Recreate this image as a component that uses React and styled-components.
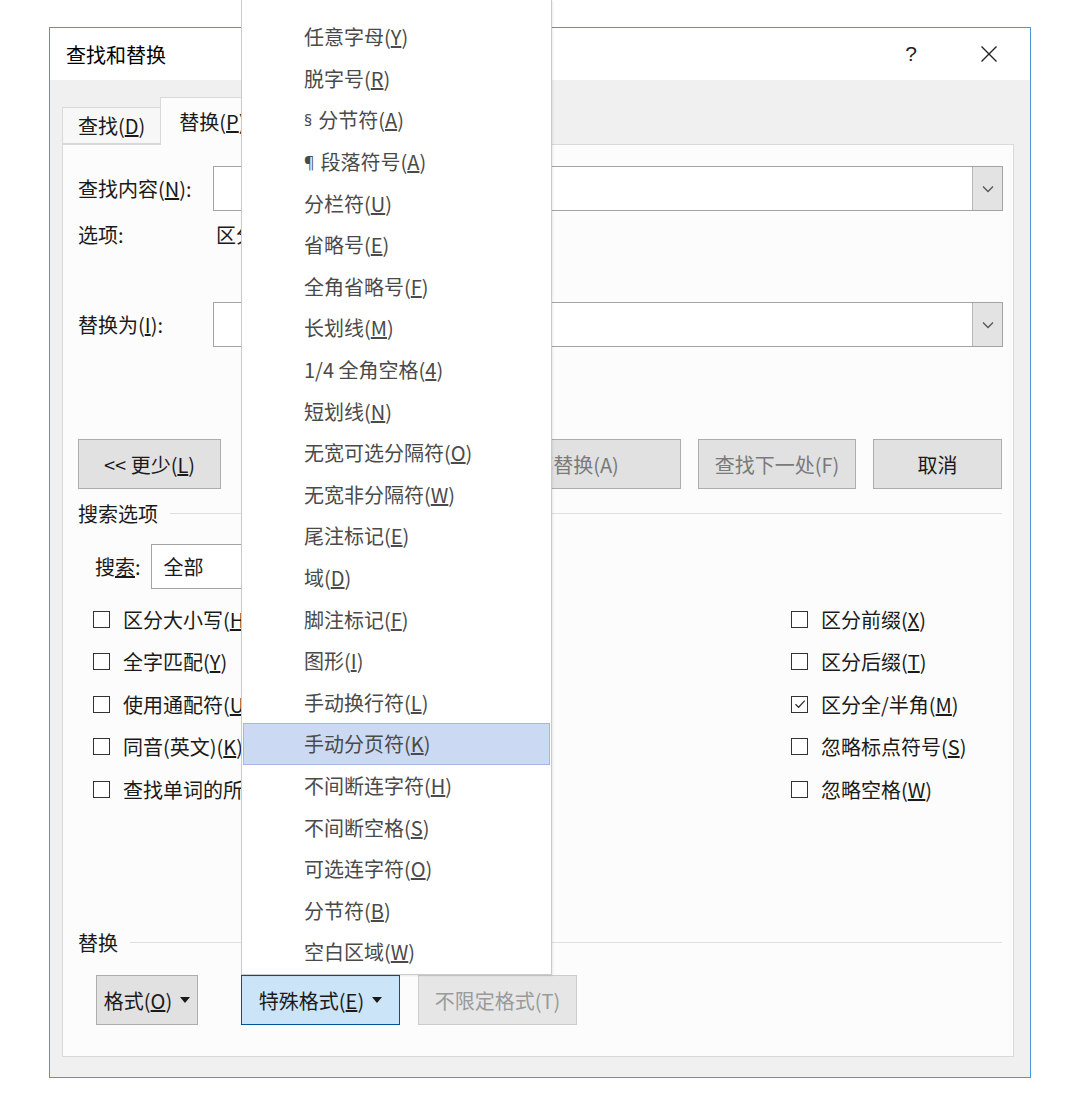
import React from 'react'
import styled, { createGlobalStyle } from 'styled-components'

const GlobalStyle = createGlobalStyle`
  html, body {
    margin: 0;
    padding: 0;
    background: #ffffff;
  }
  body {
    font-family: "Noto Sans CJK SC", "Noto Sans", sans-serif;
    font-size: 20px;
    color: #1a1a1a;
  }
  * { box-sizing: border-box; }
`

const MENU_ITEMS = [
  ['', '任意字母', 'Y'],
  ['', '脱字号', 'R'],
  ['§', '分节符', 'A'],
  ['¶', '段落符号', 'A'],
  ['', '分栏符', 'U'],
  ['', '省略号', 'E'],
  ['', '全角省略号', 'F'],
  ['', '长划线', 'M'],
  ['', '1/4 全角空格', '4'],
  ['', '短划线', 'N'],
  ['', '无宽可选分隔符', 'O'],
  ['', '无宽非分隔符', 'W'],
  ['', '尾注标记', 'E'],
  ['', '域', 'D'],
  ['', '脚注标记', 'F'],
  ['', '图形', 'I'],
  ['', '手动换行符', 'L'],
  ['', '手动分页符', 'K'],
  ['', '不间断连字符', 'H'],
  ['', '不间断空格', 'S'],
  ['', '可选连字符', 'O'],
  ['', '分节符', 'B'],
  ['', '空白区域', 'W'],
]

const LEFT_CHECKS = [
  ['区分大小写', 'H'],
  ['全字匹配', 'Y'],
  ['使用通配符', 'U'],
  ['同音(英文)', 'K'],
  ['查找单词的所有形式(英文)', 'W'],
]

const RIGHT_CHECKS = [
  ['区分前缀', 'X', false],
  ['区分后缀', 'T', false],
  ['区分全/半角', 'M', true],
  ['忽略标点符号', 'S', false],
  ['忽略空格', 'W', false],
]

function Accel({ text, k, suffix = '' }) {
  return (
    <span>
      {text}(<u>{k}</u>){suffix}
    </span>
  )
}

function Chevron() {
  return (
    <svg width="12" height="8" viewBox="0 0 12 8">
      <path d="M1 1.5 L6 6.5 L11 1.5" fill="none" stroke="#555" strokeWidth="1.3" />
    </svg>
  )
}

function Caret() {
  return (
    <svg width="10" height="6" viewBox="0 0 10 6">
      <path d="M0 0 H10 L5 6 Z" fill="#1a1a1a" />
    </svg>
  )
}

function ComboBox({ value, width }) {
  return (
    <Combo $width={width}>
      <ComboText>{value}</ComboText>
      <ComboArrow>
        <Chevron />
      </ComboArrow>
    </Combo>
  )
}

function CheckBox({ label, k, checked }) {
  return (
    <CheckRow>
      <Box>
        {checked && (
          <svg width="14" height="14" viewBox="0 0 14 14">
            <path d="M2.5 7.2 L5.6 10.3 L11.8 3.6" fill="none" stroke="#333" strokeWidth="1.3" />
          </svg>
        )}
      </Box>
      <Accel text={label} k={k} />
    </CheckRow>
  )
}

export default function App() {
  return (
    <Page>
      <GlobalStyle />
      <Dialog>
        <TitleBar>
          <Title>查找和替换</Title>
          <TitleButton>?</TitleButton>
          <TitleButton>
            <svg width="18" height="18" viewBox="0 0 18 18">
              <path d="M1.5 1.5 L16.5 16.5 M16.5 1.5 L1.5 16.5" stroke="#222" strokeWidth="1.4" />
            </svg>
          </TitleButton>
        </TitleBar>

        <TabStrip>
          <Tab>
            <Accel text="查找" k="D" />
          </Tab>
          <Tab $active>
            <Accel text="替换" k="P" />
          </Tab>
          <Tab>
            <Accel text="定位" k="G" />
          </Tab>
        </TabStrip>

        <Panel>
          <FieldRow>
            <Accel text="查找内容" k="N" suffix=":" />
            <ComboBox value="" />
          </FieldRow>
          <OptionsRow>
            <span>选项:</span>
            <span>区分全/半角</span>
          </OptionsRow>
          <FieldRow $top={60}>
            <Accel text="替换为" k="I" suffix=":" />
            <ComboBox value="" />
          </FieldRow>

          <ButtonRow>
            <Button $width={143}>
              <span>
                &lt;&lt; 更少(<u>L</u>)
              </span>
            </Button>
            <Spacer />
            <Button $width={158} $disabled>
              <span>替换(R)</span>
            </Button>
            <Button $width={230} $disabled>
              <span>全部替换(A)</span>
            </Button>
            <Button $width={158} $disabled>
              <span>查找下一处(F)</span>
            </Button>
            <Button $width={129}>
              <span>取消</span>
            </Button>
          </ButtonRow>

          <Section $top={12}>
            <span>搜索选项</span>
            <Rule />
          </Section>

          <SearchRow>
            <span>
              搜<u>索</u>:
            </span>
            <ComboBox value="全部" width={200} />
          </SearchRow>

          <CheckGrid>
            <CheckColumn>
              {LEFT_CHECKS.map(([label, k]) => (
                <CheckBox key={label} label={label} k={k} />
              ))}
            </CheckColumn>
            <CheckColumn>
              {RIGHT_CHECKS.map(([label, k, checked]) => (
                <CheckBox key={label} label={label} k={k} checked={checked} />
              ))}
            </CheckColumn>
          </CheckGrid>

          <BottomBlock>
            <Section>
              <span>替换</span>
              <Rule />
            </Section>
            <FormatRow>
              <Button $width={102}>
                <Accel text="格式" k="O" />
                <Caret />
              </Button>
              <Button $width={159} $pressed>
                <Accel text="特殊格式" k="E" />
                <Caret />
              </Button>
              <Button $width={159} $faded>
                <span>不限定格式(T)</span>
              </Button>
            </FormatRow>
          </BottomBlock>
        </Panel>
      </Dialog>

      <Menu>
        {MENU_ITEMS.map(([mark, text, k], i) => (
          <MenuItem key={i} $hot={i === 17}>
            {mark && <Mark>{mark}</Mark>}
            <Accel text={text} k={k} />
          </MenuItem>
        ))}
      </Menu>
    </Page>
  )
}

const Page = styled.div`
  position: relative;
  width: 1079px;
  height: 1099px;
  overflow: hidden;
  padding: 27px 0 0 49px;
`

const Dialog = styled.div`
  width: 982px;
  height: 1051px;
  border: 1px solid #4a98dc;
  background: #f0f0f0;
  display: flex;
  flex-direction: column;
`

const TitleBar = styled.div`
  height: 52px;
  flex-shrink: 0;
  background: #ffffff;
  display: flex;
  align-items: center;
  padding-left: 16px;
  padding-right: 18px;
`

const Title = styled.div`
  flex: 1;
  color: #000;
`

const TitleButton = styled.div`
  width: 46px;
  height: 52px;
  margin-left: 32px;
  display: flex;
  align-items: center;
  justify-content: center;
  font-family: "Liberation Sans", sans-serif;
  font-size: 21px;
  color: #222;
`

const TabStrip = styled.div`
  height: 64px;
  flex-shrink: 0;
  display: flex;
  align-items: flex-end;
  padding-left: 12px;
  position: relative;
  z-index: 1;
`

const Tab = styled.div`
  height: ${(p) => (p.$active ? '48px' : '37px')};
  margin-bottom: ${(p) => (p.$active ? '-1px' : '0')};
  margin-left: ${(p) => (p.$active ? '-1px' : '0')};
  padding: 0 ${(p) => (p.$active ? '18px' : '15px')};
  display: flex;
  align-items: center;
  background: ${(p) => (p.$active ? '#fcfcfc' : '#f7f7f7')};
  border: 1px solid #d9d9d9;
  border-bottom: ${(p) => (p.$active ? 'none' : '1px solid #d9d9d9')};
  color: #1a1a1a;
  line-height: 1;
`

const Panel = styled.div`
  flex: 1;
  margin: 0 16px 20px 12px;
  background: #fcfcfc;
  border: 1px solid #d9d9d9;
  padding: 21px 10px 31px 15px;
  display: flex;
  flex-direction: column;
`

const FieldRow = styled.div`
  display: grid;
  grid-template-columns: 135px 1fr;
  align-items: center;
  white-space: nowrap;
  margin-top: ${(p) => (p.$top || 0)}px;
`

const OptionsRow = styled.div`
  display: grid;
  grid-template-columns: 138px 1fr;
  align-items: center;
  height: 22px;
  margin-top: 9px;
`

const Combo = styled.div`
  height: 45px;
  width: ${(p) => (p.$width ? `${p.$width}px` : '100%')};
  display: flex;
  border: 1px solid #a3a3a3;
  background: #ffffff;
`

const ComboText = styled.div`
  flex: 1;
  display: flex;
  align-items: center;
  padding-left: 12px;
  color: #1a1a1a;
`

const ComboArrow = styled.div`
  width: 30px;
  display: flex;
  align-items: center;
  justify-content: center;
  background: #e3e3e3;
  border-left: 1px solid #b5b5b5;
`

const ButtonRow = styled.div`
  display: flex;
  align-items: center;
  gap: 17px;
  margin-top: 92px;
  padding-right: 1px;
`

const Spacer = styled.div`
  flex: 1;
`

const Button = styled.div`
  width: ${(p) => p.$width}px;
  height: 50px;
  flex-shrink: 0;
  display: flex;
  align-items: center;
  justify-content: center;
  gap: 8px;
  white-space: nowrap;
  background: ${(p) => (p.$pressed ? '#cce4f7' : p.$faded ? '#e6e6e6' : '#e1e1e1')};
  border: 1px solid ${(p) => (p.$pressed ? '#005499' : p.$faded ? '#cccccc' : '#adadad')};
  color: ${(p) => (p.$disabled ? '#7a7a7a' : p.$faded ? '#9a9a9a' : '#1a1a1a')};
`

const Section = styled.div`
  display: flex;
  align-items: center;
  gap: 12px;
  height: 24px;
  margin-top: ${(p) => (p.$top || 0)}px;
  padding-right: 1px;
`

const Rule = styled.div`
  flex: 1;
  height: 1px;
  background: #dedede;
`

const SearchRow = styled.div`
  display: flex;
  align-items: center;
  gap: 10px;
  height: 45px;
  margin-top: 19px;
  padding-left: 17px;
`

const CheckGrid = styled.div`
  display: grid;
  grid-template-columns: 698px 1fr;
  margin-top: 9px;
  padding-left: 15px;
`

const CheckColumn = styled.div`
  display: flex;
  flex-direction: column;
`

const CheckRow = styled.div`
  height: 42.5px;
  display: flex;
  align-items: center;
  gap: 13px;
  white-space: nowrap;
  color: #1a1a1a;
`

const Box = styled.div`
  width: 17px;
  height: 17px;
  flex-shrink: 0;
  border: 1px solid #333333;
  background: #ffffff;
  display: flex;
  align-items: center;
  justify-content: center;
`

const BottomBlock = styled.div`
  margin-top: auto;
  display: flex;
  flex-direction: column;
`

const FormatRow = styled.div`
  display: flex;
  gap: 18px;
  margin-top: 21px;
  padding-left: 18px;

  & > :first-child {
    margin-right: 25px;
  }
`

const Menu = styled.div`
  position: absolute;
  left: 241px;
  top: 0;
  width: 311px;
  height: 975px;
  padding-top: 16px;
  background: #ffffff;
  border: 1px solid #cacaca;
  border-top: none;
  box-shadow: 1px 1px 2px rgba(0, 0, 0, 0.08);
  z-index: 5;
`

const MenuItem = styled.div`
  height: 41.6px;
  margin: 0 1px;
  padding-left: 60px;
  display: flex;
  align-items: center;
  white-space: nowrap;
  color: #4a4a4a;
  background: ${(p) => (p.$hot ? '#ccd9f2' : 'transparent')};
  border: 1px solid ${(p) => (p.$hot ? '#a3b9e3' : 'transparent')};
`

const Mark = styled.span`
  font-family: "Noto Sans", sans-serif;
  font-size: 16px;
  margin-right: 6px;
`
